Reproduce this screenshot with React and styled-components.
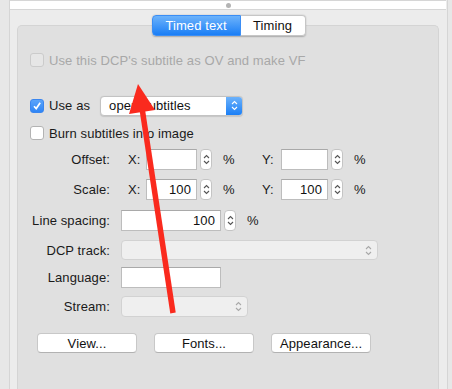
import React from "react";
import styled, { createGlobalStyle } from "styled-components";

const GlobalStyle = createGlobalStyle`
  html, body {
    margin: 0;
    padding: 0;
    background: #ececec;
  }
  body {
    font-family: "Liberation Sans", Arial, sans-serif;
    font-size: 13px;
    letter-spacing: 0.1px;
    color: #1a1a1a;
  }
`;

const Page = styled.div`
  position: relative;
  display: flex;
  width: 452px;
  height: 389px;
  overflow: hidden;
  background: #ececec;
`;

const SideStrip = styled.div`
  width: ${(p) => p.$w}px;
  flex-shrink: 0;
  background: #e7e7e7;
  border-${(p) => p.$side}: 1px solid #d5d5d5;
`;

const Main = styled.div`
  flex: 1;
  display: flex;
  flex-direction: column;
`;

const TopBar = styled.div`
  height: 8px;
  margin-right: 1px;
  background: #fff;
  border-top: 1px solid #d6d6d6;
  border-bottom: 1px solid #d6d6d6;
  display: flex;
  justify-content: center;
  align-items: center;
`;

const Dot = styled.div`
  width: 5px;
  height: 5px;
  border-radius: 50%;
  background: #b4b4b4;
`;

const Content = styled.div`
  flex: 1;
  padding: 15px 8px 0 7px;
  display: flex;
`;

const GroupBox = styled.div`
  flex: 1;
  background: #e0e0e0;
  border: 1px solid #d4d4d4;
  border-bottom: none;
  border-radius: 5px 5px 0 0;
  display: flex;
  flex-direction: column;
`;

const Tabs = styled.div`
  align-self: center;
  display: flex;
  margin-top: -11px;
  margin-left: 1px;
  height: 21px;
  border-radius: 4px;
  box-shadow: 0 0.5px 1.5px rgba(0, 0, 0, 0.25);
`;

const Tab = styled.div`
  width: ${(p) => p.$w}px;
  display: flex;
  align-items: center;
  justify-content: center;
  font-size: 13px;
  box-sizing: border-box;
  color: ${(p) => (p.$active ? "#fff" : "#111")};
  background: ${(p) =>
    p.$active ? "linear-gradient(#6db3fb, #1a7ef6)" : "#fff"};
  border: 1px solid ${(p) => (p.$active ? "#3b8ef5" : "#c6c6c6")};
  border-radius: ${(p) => (p.$active ? "4px 0 0 4px" : "0 4px 4px 0")};
  ${(p) => !p.$active && "border-left: none;"}
`;

const Row = styled.div`
  display: flex;
  align-items: center;
  height: ${(p) => p.$h || 21}px;
  margin-top: ${(p) => p.$mt}px;
  padding-left: ${(p) => p.$pl || 0}px;
`;

const CheckLabel = styled.span`
  margin-left: 5px;
  color: ${(p) => (p.$disabled ? "#a8a8a8" : "#1a1a1a")};
`;

const Box = styled.div`
  width: 14px;
  height: 14px;
  box-sizing: border-box;
  border-radius: 3px;
  display: flex;
  align-items: center;
  justify-content: center;
  background: ${(p) =>
    p.$checked ? "linear-gradient(#5aa4fa, #2f86f6)" : p.$disabled ? "#e6e6e6" : "#fff"};
  border: 1px solid
    ${(p) => (p.$checked ? "#3a86ef" : p.$disabled ? "#cbcbcb" : "#b3b3b3")};
`;

const Label = styled.div`
  width: 92px;
  flex-shrink: 0;
  text-align: right;
  margin-right: ${(p) => (p.$mr != null ? p.$mr : 11)}px;
`;

const Axis = styled.div`
  width: ${(p) => p.$w}px;
  margin-left: ${(p) => p.$ml}px;
`;

const TextInput = styled.div`
  width: ${(p) => p.$w}px;
  height: 21px;
  box-sizing: border-box;
  background: #fff;
  border: 1px solid #bdbdbd;
  border-top-color: #a9a9a9;
  display: flex;
  align-items: center;
  justify-content: flex-end;
  padding-right: 5px;
  color: #111;
`;

const StepperBox = styled.div`
  width: 12px;
  height: 21px;
  margin-left: ${(p) => p.$ml || 3}px;
  box-sizing: border-box;
  background: #fff;
  border: 1px solid #c4c4c4;
  border-radius: 4px;
  display: flex;
  align-items: center;
  justify-content: center;
`;

const Percent = styled.div`
  margin-left: 11px;
  width: ${(p) => p.$w || 10}px;
`;

const PopUp = styled.div`
  width: ${(p) => p.$w}px;
  height: ${(p) => p.$h || 20}px;
  margin-left: ${(p) => p.$ml || 0}px;
  box-sizing: border-box;
  border-radius: 4px;
  display: flex;
  align-items: center;
  overflow: hidden;
  background: ${(p) => (p.$disabled ? "#efefef" : "#fff")};
  border: 1px solid ${(p) => (p.$disabled ? "#d2d2d2" : "#c3c3c3")};
  box-shadow: ${(p) => (p.$disabled ? "none" : "0 0.5px 1px rgba(0,0,0,0.12)")};
`;

const PopText = styled.span`
  flex: 1;
  padding-left: 8px;
  color: #111;
`;

const PopArrow = styled.div`
  width: ${(p) => (p.$blue ? 16 : 18)}px;
  align-self: stretch;
  display: flex;
  align-items: center;
  justify-content: center;
  background: ${(p) => (p.$blue ? "linear-gradient(#6cb2fb, #1b7ff6)" : "transparent")};
`;

const Button = styled.div`
  width: 100px;
  height: 20px;
  box-sizing: border-box;
  margin-right: 17px;
  background: #fff;
  border: 1px solid #c8c8c8;
  border-bottom-color: #b2b2b2;
  border-radius: 4px;
  display: flex;
  align-items: center;
  justify-content: center;
  color: #111;
`;

const Overlay = styled.svg`
  position: absolute;
  left: 0;
  top: 0;
  pointer-events: none;
`;

const Chevrons = ({ color = "#444", w = 7 }) => (
  <svg width={w} height="13" viewBox="0 0 7 13">
    <path d="M1 5 L3.5 2.5 L6 5" fill="none" stroke={color} strokeWidth="1.1" />
    <path d="M1 8 L3.5 10.5 L6 8" fill="none" stroke={color} strokeWidth="1.1" />
  </svg>
);

const CheckBox = ({ checked, disabled, children }) => (
  <>
    <Box $checked={checked} $disabled={disabled}>
      {checked && (
        <svg width="10" height="10" viewBox="0 0 10 10">
          <path d="M2 5.2 L4.2 7.6 L8.2 1.8" fill="none" stroke="#fff" strokeWidth="1.7" />
        </svg>
      )}
    </Box>
    <CheckLabel $disabled={disabled}>{children}</CheckLabel>
  </>
);

const Stepper = ({ ml }) => (
  <StepperBox $ml={ml}>
    <Chevrons color="#555" w={7} />
  </StepperBox>
);

const AxisRow = ({ label, value, mt }) => (
  <Row $mt={mt}>
    <Label $mr={0}>{label}</Label>
    <Axis $w={18} $ml={18}>X:</Axis>
    <TextInput $w={51}>{value}</TextInput>
    <Stepper />
    <Percent $w={10}>%</Percent>
    <Axis $w={19} $ml={29}>Y:</Axis>
    <TextInput $w={47}>{value}</TextInput>
    <Stepper ml={3} />
    <Percent>%</Percent>
  </Row>
);

export default function App() {
  return (
    <>
      <GlobalStyle />
      <Page>
        <SideStrip $w={9} $side="right" />
        <Main>
          <TopBar>
            <Dot />
          </TopBar>
          <Content>
            <GroupBox>
              <Tabs>
                <Tab $active $w={89}>Timed text</Tab>
                <Tab $w={65}>Timing</Tab>
              </Tabs>

              <Row $mt={15} $h={18} $pl={12}>
                <CheckBox disabled>Use this DCP's subtitle as OV and make VF</CheckBox>
              </Row>

              <Row $mt={26} $pl={12}>
                <CheckBox checked>Use as</CheckBox>
                <PopUp $w={143} $ml={10}>
                  <PopText>open subtitles</PopText>
                  <PopArrow $blue>
                    <Chevrons color="#fff" />
                  </PopArrow>
                </PopUp>
              </Row>

              <Row $mt={8} $h={18} $pl={12}>
                <CheckBox>Burn subtitles into image</CheckBox>
              </Row>

              <AxisRow label="Offset:" value="" mt={7} />
              <AxisRow label="Scale:" value="100" mt={9} />

              <Row $mt={10}>
                <Label>Line spacing:</Label>
                <TextInput $w={100}>100</TextInput>
                <Stepper />
                <Percent>%</Percent>
              </Row>

              <Row $mt={9} $h={20}>
                <Label>DCP track:</Label>
                <PopUp $disabled $w={257}>
                  <PopText />
                  <PopArrow>
                    <Chevrons color="#a9a9a9" />
                  </PopArrow>
                </PopUp>
              </Row>

              <Row $mt={7}>
                <Label>Language:</Label>
                <TextInput $w={100} />
              </Row>

              <Row $mt={8}>
                <Label>Stream:</Label>
                <PopUp $disabled $w={127} $h={21}>
                  <PopText />
                  <PopArrow>
                    <Chevrons color="#a9a9a9" />
                  </PopArrow>
                </PopUp>
              </Row>

              <Row $mt={16} $h={20} $pl={19}>
                <Button>View...</Button>
                <Button>Fonts...</Button>
                <Button>Appearance...</Button>
              </Row>
            </GroupBox>
          </Content>
        </Main>
        <SideStrip $w={4} $side="left" />
        <Overlay width="452" height="389">
          <line x1="173" y1="313" x2="142" y2="108" stroke="#fa2a1e" strokeWidth="5.5" />
          <polygon points="138,84 129,114 155,110" fill="#fa2a1e" />
        </Overlay>
      </Page>
    </>
  );
}
